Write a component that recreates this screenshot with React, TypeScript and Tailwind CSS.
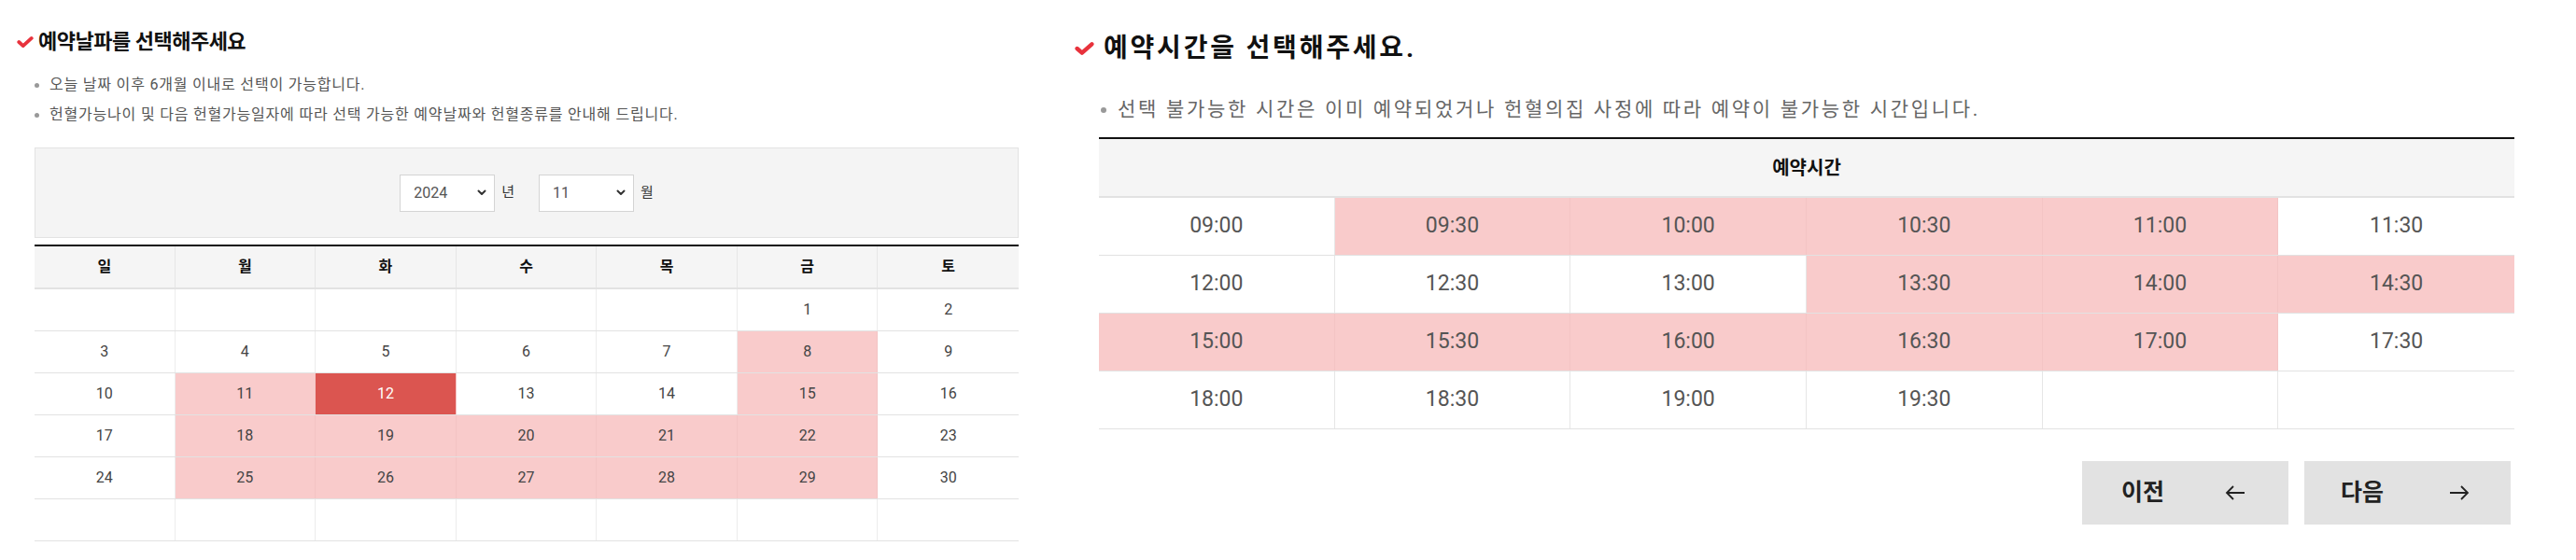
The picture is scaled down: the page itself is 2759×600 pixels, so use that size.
import React from "react";

const Check = ({ w, h }: { w: number; h: number }) => (
  <svg width={w} height={h} viewBox="0 0 20 15" className="shrink-0">
    <path d="M2.5 7.5 L7.5 12 L17.5 3" fill="none" stroke="#e8323c" strokeWidth="4.2" strokeLinecap="round" strokeLinejoin="round" />
  </svg>
);

const Chevron = () => (
  <svg width="10" height="7" viewBox="0 0 10 7">
    <path d="M1.5 1.5 L5 5 L8.5 1.5" fill="none" stroke="#333" strokeWidth="2" strokeLinecap="round" strokeLinejoin="round" />
  </svg>
);

const Select = ({ value }: { value: string }) => (
  <div className="w-[102px] h-[40px] bg-white border border-[#d4d4d4] flex items-center justify-between pl-[14px] pr-[8px] text-[16px] text-[#555]">
    <span>{value}</span>
    <Chevron />
  </div>
);

type Day = { n?: number; s?: "p" | "r" };

const weeks: Day[][] = [
  [{}, {}, {}, {}, {}, { n: 1 }, { n: 2 }],
  [{ n: 3 }, { n: 4 }, { n: 5 }, { n: 6 }, { n: 7 }, { n: 8, s: "p" }, { n: 9 }],
  [{ n: 10 }, { n: 11, s: "p" }, { n: 12, s: "r" }, { n: 13 }, { n: 14 }, { n: 15, s: "p" }, { n: 16 }],
  [{ n: 17 }, { n: 18, s: "p" }, { n: 19, s: "p" }, { n: 20, s: "p" }, { n: 21, s: "p" }, { n: 22, s: "p" }, { n: 23 }],
  [{ n: 24 }, { n: 25, s: "p" }, { n: 26, s: "p" }, { n: 27, s: "p" }, { n: 28, s: "p" }, { n: 29, s: "p" }, { n: 30 }],
  [{}, {}, {}, {}, {}, {}, {}],
];

const days = ["일", "월", "화", "수", "목", "금", "토"];

type T = { t: string; p?: boolean };
const times: T[][] = [
  [{ t: "09:00" }, { t: "09:30", p: true }, { t: "10:00", p: true }, { t: "10:30", p: true }, { t: "11:00", p: true }, { t: "11:30" }],
  [{ t: "12:00" }, { t: "12:30" }, { t: "13:00" }, { t: "13:30", p: true }, { t: "14:00", p: true }, { t: "14:30", p: true }],
  [{ t: "15:00", p: true }, { t: "15:30", p: true }, { t: "16:00", p: true }, { t: "16:30", p: true }, { t: "17:00", p: true }, { t: "17:30" }],
  [{ t: "18:00" }, { t: "18:30" }, { t: "19:00" }, { t: "19:30" }, { t: "" }, { t: "" }],
];

export default function App() {
  return (
    <div
      className="w-[2759px] h-[600px] bg-white flex text-[#333]"
      style={{ fontFamily: "Roboto, 'Noto Sans CJK KR', 'Noto Sans', sans-serif" }}
    >
      {/* Left: date */}
      <div className="w-[1151px] shrink-0 pl-[18px] pt-[30px]">
        <div className="flex items-center gap-[5px] h-[30px]">
          <Check w={18} h={14} />
          <h2 className="text-[22px] leading-[30px] font-bold text-[#111] tracking-[-0.5px]">예약날파를 선택해주세요</h2>
        </div>
        <ul className="mt-[15px] ml-[19px]">
          {[
            "오늘 날짜 이후 6개월 이내로 선택이 가능합니다.",
            "헌혈가능나이 및 다음 헌혈가능일자에 따라 선택 가능한 예약날짜와 헌혈종류를 안내해 드립니다.",
          ].map((s) => (
            <li key={s} className="flex items-center h-[32px] text-[16px] text-[#555] tracking-[0.8px]">
              <span className="w-[5px] h-[5px] rounded-full bg-[#999] mr-[11px]" />
              {s}
            </li>
          ))}
        </ul>
        <div className="ml-[19px] w-[1054px]">
          <div className="mt-[19px] h-[97px] bg-[#f4f4f4] border border-[#e3e3e3] flex items-center justify-center">
            <Select value="2024" />
            <span className="ml-[7px] text-[15px] text-[#333]">년</span>
            <div className="ml-[26px]">
              <Select value="11" />
            </div>
            <span className="ml-[7px] text-[15px] text-[#333]">월</span>
          </div>
          <div className="mt-[7px] border-t-2 border-[#111]">
            <div className="grid grid-cols-7 bg-[#f5f5f5] border-b-2 border-[#e2e2e2]">
              {days.map((d, i) => (
                <div
                  key={d}
                  className={`h-[44px] flex items-center justify-center text-[16px] font-bold text-[#111] ${i < 6 ? "border-r border-[#e6e6e6]" : ""}`}
                >
                  {d}
                </div>
              ))}
            </div>
            {weeks.map((w, wi) => (
              <div key={wi} className="grid grid-cols-7 border-b border-[#e2e2e2]">
                {w.map((d, i) => (
                  <div
                    key={i}
                    className={`h-[44px] flex items-center justify-center text-[16px] ${
                      d.s === "r"
                        ? "bg-[#db5550] text-white"
                        : d.s === "p"
                        ? "bg-[#f9cbcb] text-[#444]"
                        : "bg-white text-[#444]"
                    } ${i < 6 ? (d.s ? "border-r border-[#f3c4c4]" : "border-r border-[#ececec]") : ""}`}
                  >
                    {d.n ?? ""}
                  </div>
                ))}
              </div>
            ))}
          </div>
        </div>
      </div>

      {/* Right: time */}
      <div className="w-[1542px] shrink-0 pt-[37px]">
        <div className="flex items-center gap-[10px] h-[30px]">
          <Check w={21} h={16} />
          <h2 className="text-[28px] leading-[30px] font-bold text-[#111] tracking-[2.8px]">예약시간을 선택해주세요.</h2>
        </div>
        <div className="mt-[36px] ml-[28px] flex items-center h-[30px] text-[21px] text-[#666] tracking-[2.7px]">
          <span className="w-[6px] h-[6px] rounded-full bg-[#999] mr-[12px]" />
          선택 불가능한 시간은 이미 예약되었거나 헌혈의집 사정에 따라 예약이 불가능한 시간입니다.
        </div>
        <div className="ml-[26px] w-[1516px] mt-[14px] border-t-2 border-[#111]">
          <div className="h-[63px] bg-[#f5f5f5] border-b-2 border-[#e2e2e2] flex items-center justify-center text-[20px] font-bold text-[#111]">
            예약시간
          </div>
          {times.map((r, ri) => (
            <div key={ri} className="grid grid-cols-6 border-b border-[#e2e2e2]">
              {r.map((c, i) => (
                <div
                  key={i}
                  className={`h-[61px] flex items-center justify-center text-[23px] text-[#555] ${
                    c.p ? "bg-[#f9cbcb]" : "bg-white"
                  } ${i < 5 ? (c.p ? "border-r border-[#f3c4c4]" : "border-r border-[#e6e6e6]") : ""}`}
                >
                  {c.t}
                </div>
              ))}
            </div>
          ))}
          <div className="mt-[34px] flex justify-end gap-[17px] pr-[4px]">
            <button className="w-[221px] h-[68px] bg-[#e2e2e2] flex items-center justify-between pl-[42px] pr-[46px] text-[25px] font-bold text-[#222]">
              <span>이전</span>
              <svg width="22" height="18" viewBox="0 0 22 18">
                <path d="M21 9 H2 M9 2 L2 9 L9 16" fill="none" stroke="#222" strokeWidth="1.8" />
              </svg>
            </button>
            <button className="w-[221px] h-[68px] bg-[#e2e2e2] flex items-center justify-between pl-[39px] pr-[44px] text-[25px] font-bold text-[#222]">
              <span>다음</span>
              <svg width="22" height="18" viewBox="0 0 22 18">
                <path d="M1 9 H20 M13 2 L20 9 L13 16" fill="none" stroke="#222" strokeWidth="1.8" />
              </svg>
            </button>
          </div>
        </div>
      </div>
    </div>
  );
}
